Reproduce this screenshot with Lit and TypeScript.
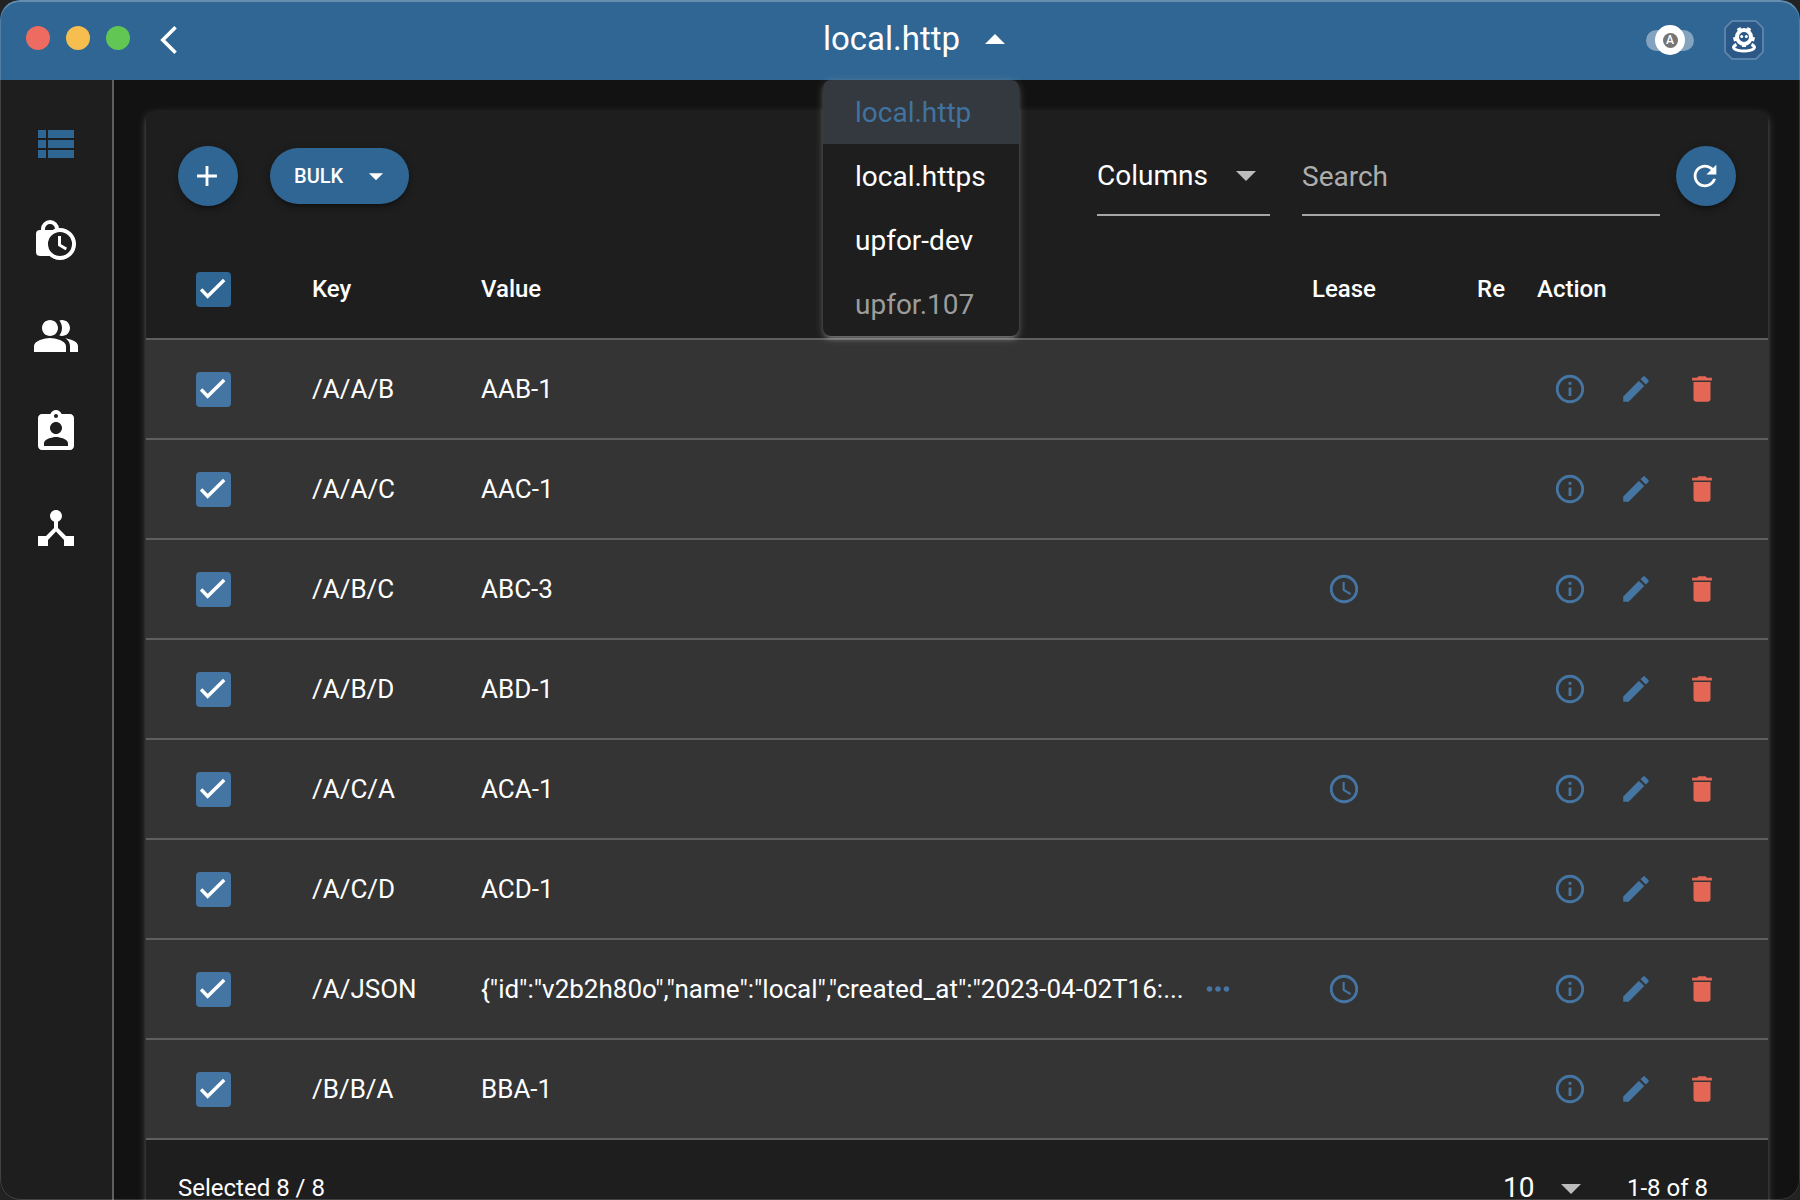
import { LitElement, html, svg, css } from "lit";
import { customElement, property, state } from "lit/decorators.js";

const ICONS: Record<string, string> = {
  list: "M3 14h4v-4H3v4zm0 5h4v-4H3v4zM3 9h4V5H3v4zm5 5h13v-4H8v4zm0 5h13v-4H8v4zM8 5v4h13V5H8z",
  people:
    "M16.67 13.13C18.04 14.06 19 15.32 19 17v3h4v-3c0-2.18-3.57-3.47-6.33-3.87zM15 12c2.21 0 4-1.79 4-4s-1.79-4-4-4c-.47 0-.91.1-1.33.24C14.5 5.27 15 6.58 15 8s-.5 2.73-1.33 3.76c.42.14.86.24 1.33.24zM9 12c2.21 0 4-1.79 4-4s-1.79-4-4-4-4 1.79-4 4 1.79 4 4 4zM9 13c-2.67 0-8 1.34-8 4v3h16v-3c0-2.66-5.33-4-8-4z",
  roles:
    "M19 3h-4.18C14.4 1.84 13.3 1 12 1c-1.3 0-2.4.84-2.82 2H5c-1.1 0-2 .9-2 2v14c0 1.1.9 2 2 2h14c1.1 0 2-.9 2-2V5c0-1.1-.9-2-2-2zm-7 0c.55 0 1 .45 1 1s-.45 1-1 1-1-.45-1-1 .45-1 1-1zm0 4c1.66 0 3 1.34 3 3s-1.34 3-3 3-3-1.34-3-3 1.34-3 3-3zm6 12H6v-1.4c0-2 4-3.1 6-3.1s6 1.1 6 3.1V19z",
  hub: "M17 16l-4-4V8.82C14.16 8.4 15 7.3 15 6c0-1.66-1.34-3-3-3S9 4.34 9 6c0 1.3.84 2.4 2 2.82V12l-4 4H3v5h5v-3.05l4-4.2 4 4.2V21h5v-5h-4z",
  back: "M17.51 3.87L15.73 2.1 5.84 12l9.9 9.9 1.77-1.77L9.38 12l8.13-8.13z",
  up: "M7 14l5-5 5 5z",
  down: "M7 10l5 5 5-5z",
  plus: "M19 13h-6v6h-2v-6H5v-2h6V5h2v6h6v2z",
  refresh:
    "M17.65 6.35C16.2 4.9 14.21 4 12 4c-4.42 0-7.99 3.58-7.99 8s3.57 8 7.99 8c3.73 0 6.84-2.55 7.73-6h-2.08c-.82 2.33-3.04 4-5.65 4-3.31 0-6-2.69-6-6s2.69-6 6-6c1.66 0 3.14.69 4.22 1.78L13 11h7V4l-2.35 2.35z",
  info: "M11 7h2v2h-2zm0 4h2v6h-2zm1-9C6.48 2 2 6.48 2 12s4.48 10 10 10 10-4.48 10-10S17.52 2 12 2zm0 18c-4.41 0-8-3.59-8-8s3.59-8 8-8 8 3.59 8 8-3.59 8-8 8z",
  edit: "M3 17.25V21h3.75L17.81 9.94l-3.75-3.75L3 17.25zM20.71 7.04c.39-.39.39-1.02 0-1.41l-2.34-2.34c-.39-.39-1.02-.39-1.41 0l-1.83 1.83 3.75 3.75 1.83-1.83z",
  trash:
    "M6 19c0 1.1.9 2 2 2h8c1.1 0 2-.9 2-2V7H6v12zM19 4h-3.5l-1-1h-5l-1 1H5v2h14V4z",
  clock:
    "M11.99 2C6.47 2 2 6.48 2 12s4.47 10 9.99 10C17.52 22 22 17.52 22 12S17.52 2 11.99 2zM12 20c-4.42 0-8-3.58-8-8s3.58-8 8-8 8 3.58 8 8-3.58 8-8 8zm.5-13H11v6l5.25 3.15.75-1.23-4.5-2.67z",
  more: "M6 10c-1.1 0-2 .9-2 2s.9 2 2 2 2-.9 2-2-.9-2-2-2zm12 0c-1.1 0-2 .9-2 2s.9 2 2 2 2-.9 2-2-.9-2-2-2zm-6 0c-1.1 0-2 .9-2 2s.9 2 2 2 2-.9 2-2-.9-2-2-2z",
};

@customElement("ui-icon")
class UiIcon extends LitElement {
  @property() name = "";

  static styles = css`
    :host {
      display: inline-grid;
      width: 34px;
      height: 34px;
      flex: none;
    }
    .glyph {
      width: 100%;
      height: 100%;
      fill: currentColor;
    }
  `;

  render() {
    const shape =
      this.name === "lease"
        ? svg`
            <path d="M5.5 8V6.500a3.500 3.500 0 0 1 7 0V8" fill="none" stroke="currentColor" stroke-width="2" />
            <path d="M4 7h10.200a7 7 0 0 0-3.900 13H4a2 2 0 0 1-2-2V9a2 2 0 0 1 2-2z" />
            <circle cx="14" cy="14" r="7" fill="#1e1e1e" stroke="currentColor" stroke-width="2" />
            <path d="M13.750 10v4.500l3.400 2" fill="none" stroke="currentColor" stroke-width="1.500" />`
        : svg`<path d=${ICONS[this.name] ?? ""} />`;
    return html`<svg class="glyph" viewBox="0 0 24 24" aria-hidden="true">${shape}</svg>`;
  }
}

@customElement("check-box")
class CheckBox extends LitElement {
  @property() label = "";
  @property({ type: Boolean }) checked = false;
  @property({ type: Boolean, reflect: true }) muted = false;

  static styles = css`
    :host {
      display: inline-grid;
      vertical-align: middle;
      color: #306693;
    }
    :host([muted]) {
      color: #4576a3;
    }
    .wrap {
      display: grid;
      place-items: center;
    }
    .box,
    .tick {
      grid-area: 1 / 1;
    }
    .box {
      appearance: none;
      width: 35px;
      height: 35px;
      margin: 0;
      border: 3px solid #8a8a8a;
      border-radius: 4px;
      color: inherit;
    }
    .box:checked {
      border-color: currentColor;
      background: currentColor;
    }
    .tick {
      width: 27px;
      height: 27px;
      fill: none;
      stroke: #fff;
      stroke-width: 3;
      pointer-events: none;
      visibility: hidden;
    }
    .box:checked + .tick {
      visibility: visible;
    }
  `;

  render() {
    return html`
      <label class="wrap">
        <input class="box" type="checkbox" aria-label=${this.label} .checked=${this.checked} />
        <svg class="tick" viewBox="0 0 24 24" aria-hidden="true">
          <path d="M1 12L6.800 18 21.500 3.500" />
        </svg>
      </label>
    `;
  }
}

interface Entry {
  key: string;
  value: string;
  lease?: boolean;
  more?: boolean;
}

const ENTRIES: Entry[] = [
  { key: "/A/A/B", value: "AAB-1" },
  { key: "/A/A/C", value: "AAC-1" },
  { key: "/A/B/C", value: "ABC-3", lease: true },
  { key: "/A/B/D", value: "ABD-1" },
  { key: "/A/C/A", value: "ACA-1", lease: true },
  { key: "/A/C/D", value: "ACD-1" },
  {
    key: "/A/JSON",
    value: '{"id":"v2b2h80o","name":"local","created_at":"2023-04-02T16:...',
    lease: true,
    more: true,
  },
  { key: "/B/B/A", value: "BBA-1" },
];

const SERVERS = [
  { name: "local.http" },
  { name: "local.https" },
  { name: "upfor-dev" },
  { name: "upfor.107", disabled: true },
];

const PAGES = [
  { icon: "list", label: "Key values" },
  { icon: "lease", label: "Leases" },
  { icon: "people", label: "Users" },
  { icon: "roles", label: "Roles" },
  { icon: "hub", label: "Cluster" },
];

@customElement("app-root")
class AppRoot extends LitElement {
  @state() private server = "local.http";
  @state() private menuOpen = true;
  @state() private page = "list";

  static styles = css`
    :host {
      display: block;
      height: 100vh;
      background: #222;
      color: #fff;
      font-family: Roboto, "Liberation Sans", sans-serif;
      font-size: 24px;
      line-height: 32px;
    }
    * {
      box-sizing: border-box;
    }
    button,
    input,
    select {
      font: inherit;
      color: inherit;
      margin: 0;
      padding: 0;
      border: 0;
      background: none;
    }
    button {
      cursor: pointer;
    }
    .window {
      position: relative;
      display: flex;
      flex-direction: column;
      height: 100%;
      overflow: hidden;
      border-radius: 20px;
      background: #121212;
    }
    .window::after {
      content: "";
      position: absolute;
      inset: 0;
      border: 1px solid rgba(255, 255, 255, 0.16);
      border-top: 2px solid rgba(255, 255, 255, 0.26);
      border-radius: 20px;
      pointer-events: none;
    }

    .bar {
      display: flex;
      align-items: center;
      flex: none;
      height: 80px;
      background: #306693;
    }
    .bar-left {
      display: flex;
      align-items: center;
      gap: 22px;
      width: 196px;
      padding-left: 26px;
    }
    .lights {
      display: flex;
      gap: 16px;
      padding-bottom: 4px;
    }
    .light {
      width: 24px;
      height: 24px;
      border-radius: 50%;
    }
    .close {
      background: #ed6b60;
    }
    .minimize {
      background: #f5be4f;
    }
    .maximize {
      background: #62c655;
    }
    .back {
      display: grid;
    }
    .bar-center {
      display: flex;
      flex: 1;
      justify-content: center;
    }
    .bar-right {
      display: flex;
      align-items: center;
      gap: 30px;
      width: 154px;
    }
    .picker {
      position: relative;
      width: 196px;
    }
    .picker-button {
      display: flex;
      align-items: center;
      justify-content: space-between;
      width: 100%;
      height: 80px;
      font-size: 33px;
    }
    .picker-name {
      padding-bottom: 2px;
    }
    .large {
      width: 48px;
      height: 48px;
    }
    .menu {
      position: absolute;
      top: 100%;
      left: 0;
      z-index: 2;
      width: 100%;
      overflow: hidden;
      border-radius: 8px;
      background: #1e1e1e;
      box-shadow:
        0 2px 10px rgba(255, 255, 255, 0.2),
        0 4px 4px rgba(255, 255, 255, 0.14),
        0 6px 2px -4px rgba(255, 255, 255, 0.12);
    }
    .option {
      display: block;
      width: 100%;
      height: 64px;
      padding: 2px 32px 0;
      font-size: 28px;
      text-align: left;
    }
    .option.current {
      background: #34383f;
      color: #40739f;
    }
    .option:disabled {
      color: #9c9c9c;
    }
    .theme {
      display: grid;
      place-items: center;
      width: 48px;
      height: 30px;
    }
    .track,
    .thumb {
      grid-area: 1 / 1;
    }
    .track {
      width: 48px;
      height: 21px;
      border-radius: 11px;
      background: #83a3be;
    }
    .thumb {
      display: grid;
      place-items: center;
      width: 30px;
      height: 30px;
      border-radius: 50%;
      background: #fff;
    }
    .letter {
      width: 15px;
      height: 15px;
      border-radius: 50%;
      background: #757575;
      font-size: 12px;
      font-weight: 500;
      line-height: 15px;
      text-align: center;
    }
    .brand {
      display: grid;
      width: 40px;
      height: 40px;
    }

    .body {
      display: flex;
      flex: 1;
      min-height: 0;
    }
    .side {
      display: flex;
      flex-direction: column;
      flex: none;
      width: 114px;
      padding-top: 16px;
      border-right: 2px solid #5f5f5f;
      background: #1e1e1e;
    }
    .nav {
      display: grid;
      place-items: center;
      height: 96px;
      color: #fff;
    }
    .nav.current {
      color: #306693;
    }
    .main {
      flex: 1;
      min-width: 0;
      overflow: hidden;
      padding: 32px;
    }
    .card {
      border-radius: 8px;
      background: #1e1e1e;
      box-shadow:
        0 2px 10px rgba(255, 255, 255, 0.2),
        0 4px 4px rgba(255, 255, 255, 0.14),
        0 6px 2px -4px rgba(255, 255, 255, 0.12);
    }
    .tools {
      display: flex;
      align-items: center;
      height: 128px;
      padding: 0 32px;
    }
    .round,
    .bulk {
      background: #306693;
      box-shadow:
        0 2px 10px rgba(0, 0, 0, 0.2),
        0 4px 4px rgba(0, 0, 0, 0.14),
        0 6px 2px -4px rgba(0, 0, 0, 0.12);
    }
    .round {
      display: grid;
      place-items: center;
      flex: none;
      width: 60px;
      height: 60px;
      padding-right: 2px;
      border-radius: 50%;
    }
    .bulk {
      display: flex;
      align-items: center;
      gap: 16px;
      height: 56px;
      margin-left: 32px;
      padding: 0 16px 0 24px;
      border-radius: 28px;
      font-size: 20px;
      font-weight: 500;
    }
    .pick {
      display: grid;
      align-items: center;
      justify-items: end;
      color: #bcbcbc;
    }
    .pick-input,
    .pick-icon {
      grid-area: 1 / 1;
    }
    .pick-icon {
      width: 48px;
      height: 48px;
      pointer-events: none;
    }
    .pick-input {
      appearance: none;
      width: 100%;
      height: 48px;
      color: #fff;
      font-size: 28px;
    }
    .columns {
      width: 173px;
      height: 80px;
      margin-left: auto;
      border-bottom: 2px solid #a6a6a6;
    }
    .columns .pick-input {
      height: 78px;
      padding-top: 2px;
    }
    .search {
      width: 358px;
      height: 80px;
      margin: 0 16px 0 32px;
      padding-top: 2px;
      border-bottom: 2px solid #a6a6a6;
      border-radius: 0;
      font-size: 28px;
      outline: none;
    }
    .search::placeholder {
      color: #adadad;
      opacity: 1;
    }

    .grid {
      width: 100%;
      table-layout: fixed;
      border-spacing: 0;
    }
    .grid th,
    .grid td {
      height: 100px;
      padding: 0 32px;
      border-bottom: 2px solid #5f5f5f;
      text-align: left;
      white-space: nowrap;
    }
    .grid th {
      font-weight: 500;
    }
    .grid td {
      background: #343434;
      font-size: 26px;
    }
    .grid .c-check {
      width: 134px;
      padding: 0;
      text-align: center;
    }
    .c-key {
      width: 169px;
    }
    .grid .c-lease {
      width: 126px;
      padding: 0;
      text-align: center;
      color: #4576a3;
    }
    .grid th.c-lease {
      color: #fff;
    }
    .grid .c-rest {
      width: 98px;
      padding: 0;
      text-align: right;
    }
    .c-action {
      width: 263px;
    }
    .value {
      display: flex;
      align-items: center;
      gap: 4px;
    }
    .actions {
      display: flex;
    }
    .act {
      display: grid;
      place-items: center;
      width: 66px;
      height: 66px;
      color: #4576a3;
    }
    .act.delete {
      color: #e46654;
    }
    .lease-icon {
      display: grid;
      margin: 0 auto;
    }
    .foot {
      display: flex;
      align-items: center;
      height: 96px;
      padding: 0 60px 0 32px;
      line-height: 24px;
    }
    .per-page {
      width: 92px;
      margin: 0 32px 0 auto;
    }
  `;

  private choose(name: string) {
    this.server = name;
    this.menuOpen = false;
  }

  private renderBar() {
    return html`
      <header class="bar">
        <div class="bar-left">
          <div class="lights">
            <button class="light close" aria-label="Close"></button>
            <button class="light minimize" aria-label="Minimize"></button>
            <button class="light maximize" aria-label="Maximize"></button>
          </div>
          <button class="back" aria-label="Back"><ui-icon name="back"></ui-icon></button>
        </div>
        <div class="bar-center">
          <div class="picker">
            <button
              class="picker-button"
              aria-haspopup="listbox"
              aria-expanded=${this.menuOpen}
              @click=${() => (this.menuOpen = !this.menuOpen)}
            >
              <span class="picker-name">${this.server}</span>
              <ui-icon class="large" name=${this.menuOpen ? "up" : "down"}></ui-icon>
            </button>
            ${this.menuOpen
              ? html`<div class="menu" role="listbox" aria-label="Server">
                  ${SERVERS.map(
                    (s) => html`<button
                      class="option ${s.name === this.server ? "current" : ""}"
                      role="option"
                      aria-selected=${s.name === this.server}
                      ?disabled=${s.disabled}
                      @click=${() => this.choose(s.name)}
                    >${s.name}</button>`,
                  )}
                </div>`
              : null}
          </div>
        </div>
        <div class="bar-right">
          <button class="theme" role="switch" aria-checked="mixed" aria-label="Theme">
            <span class="track"></span>
            <span class="thumb"><span class="letter">A</span></span>
          </button>
          <button class="brand" aria-label="About">
            <svg width="40" height="40" viewBox="0 0 40 40" aria-hidden="true">
              <path
                d="M8 1h24l7 7v24l-7 7H8l-7-7V8z"
                fill="#2b5886"
                stroke="#5983a9"
                stroke-width="2"
                stroke-linejoin="round"
              />
              <circle cx="20" cy="17" r="7" fill="none" stroke="#fff" stroke-width="4" />
              <path
                d="M16.500 11.500l-2-3.500M23.500 11.500l2-3.500M13 18.500l-3.500 1M27 18.500l3.500 1M20 22v5"
                fill="none"
                stroke="#fff"
                stroke-width="4"
              />
              <circle cx="17.700" cy="16.500" r="1.500" fill="#fff" />
              <circle cx="22.300" cy="16.500" r="1.500" fill="#fff" />
              <path
                d="M12.500 24.500C6 27.500 11 31 20 31s14-3.500 7.500-6.500"
                fill="none"
                stroke="#fff"
                stroke-width="3.200"
              />
            </svg>
          </button>
        </div>
      </header>
    `;
  }

  private renderRow(e: Entry) {
    return html`
      <tr>
        <td class="c-check"><check-box muted checked label="Select ${e.key}"></check-box></td>
        <td>${e.key}</td>
        <td>
          <div class="value">
            <span>${e.value}</span>
            ${e.more
              ? html`<button class="act" aria-label="Show full value"><ui-icon name="more"></ui-icon></button>`
              : null}
          </div>
        </td>
        <td class="c-lease">${e.lease ? html`<ui-icon class="lease-icon" name="clock"></ui-icon>` : null}</td>
        <td class="c-rest"></td>
        <td>
          <div class="actions">
            <button class="act" aria-label="Details of ${e.key}"><ui-icon name="info"></ui-icon></button>
            <button class="act" aria-label="Edit ${e.key}"><ui-icon name="edit"></ui-icon></button>
            <button class="act delete" aria-label="Delete ${e.key}"><ui-icon name="trash"></ui-icon></button>
          </div>
        </td>
      </tr>
    `;
  }

  render() {
    const count = ENTRIES.length;
    return html`
      <div class="window">
        ${this.renderBar()}
        <div class="body">
          <nav class="side">
            ${PAGES.map(
              (p) => html`<a
                class="nav ${p.icon === this.page ? "current" : ""}"
                href="#${p.icon}"
                aria-label=${p.label}
                @click=${() => (this.page = p.icon)}
              ><ui-icon class="large" name=${p.icon}></ui-icon></a>`,
            )}
          </nav>
          <main class="main">
            <section class="card">
              <div class="tools">
                <button class="round" aria-label="Add"><ui-icon name="plus"></ui-icon></button>
                <button class="bulk">BULK<ui-icon name="down"></ui-icon></button>
                <div class="pick columns">
                  <select class="pick-input" aria-label="Columns">
                    <option>Columns</option>
                  </select>
                  <ui-icon class="pick-icon" name="down"></ui-icon>
                </div>
                <input class="search" type="text" placeholder="Search" aria-label="Search" />
                <button class="round" aria-label="Refresh"><ui-icon name="refresh"></ui-icon></button>
              </div>
              <table class="grid">
                <thead>
                  <tr>
                    <th class="c-check"><check-box checked label="Select all"></check-box></th>
                    <th class="c-key">Key</th>
                    <th>Value</th>
                    <th class="c-lease">Lease</th>
                    <th class="c-rest">Re</th>
                    <th class="c-action">Action</th>
                  </tr>
                </thead>
                <tbody>
                  ${ENTRIES.map((e) => this.renderRow(e))}
                </tbody>
              </table>
              <div class="foot">
                <span>${`Selected ${count} / ${count}`}</span>
                <div class="pick per-page">
                  <select class="pick-input" aria-label="Rows per page">
                    <option>10</option>
                  </select>
                  <ui-icon class="pick-icon" name="down"></ui-icon>
                </div>
                <span>${`1-${count} of ${count}`}</span>
              </div>
            </section>
          </main>
        </div>
      </div>
    `;
  }
}
